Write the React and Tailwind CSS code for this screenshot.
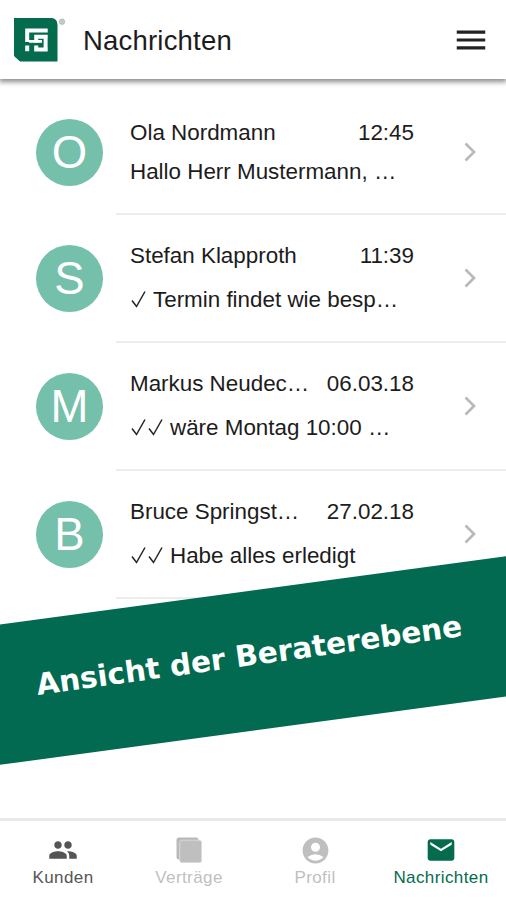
import React from "react";
import { MdAccountCircle, MdEmail, MdMenu, MdPeople } from "react-icons/md";

const messages = [
  { name: "Ola Nordmann", date: "12:45", text: "Hallo Herr Mustermann, …", checks: 0 },
  { name: "Stefan Klapproth", date: "11:39", text: "Termin findet wie besp…", checks: 1 },
  { name: "Markus Neudec…", date: "06.03.18", text: "wäre Montag 10:00 …", checks: 2 },
  { name: "Bruce Springst…", date: "27.02.18", text: "Habe alles erledigt", checks: 2 },
];

function Logo() {
  return (
    <svg viewBox="0 0 52 44" className="h-11 w-[52px]">
      <path d="M0 0H38Q43.5 1 43.5 7V43.5H6L0 38Z" fill="#046b4d" />
      <path
        d="M13.2 10.6V24M11.2 12.5H33.7M13.2 27.6V33.2M31.6 17V33.2M20.3 18.8H33.7M22.2 17V24.6M22.2 27.6V33.2M20.3 31.4H33.7"
        fill="none"
        stroke="#fff"
        strokeWidth="4"
      />
      <path d="M15 23.4H28" stroke="#fff" strokeWidth="2.8" />
      <circle cx="48" cy="3.7" r="2.7" fill="#c3ceca" stroke="#a9b5b1" strokeWidth="0.8" />
    </svg>
  );
}

function Check() {
  return (
    <svg viewBox="0 0 17 18" className="h-[18px] w-[17px]">
      <path d="M2 10.5L6.5 16.5L15 1.5" fill="none" stroke="#222" strokeWidth="1.5" />
    </svg>
  );
}

function Chevron() {
  return (
    <svg viewBox="0 0 12 20" className="ml-[50px] h-5 w-3">
      <path d="M1.5 1.5L10 10L1.5 18.5" fill="none" stroke="#b9b9b9" strokeWidth="2.7" />
    </svg>
  );
}

function SheetsIcon() {
  return (
    <svg viewBox="0 0 26 26" className="size-[26px]">
      <rect x="0.5" y="0.5" width="22" height="22" rx="2.5" fill="#b9b9b9" />
      <rect x="3.7" y="3.2" width="22" height="22.5" rx="2.5" fill="#bfbfbf" stroke="#e0e0e0" strokeWidth="0.8" />
    </svg>
  );
}

function MessageRow({ message, first }) {
  return (
    <div className={first ? "flex h-[124px] pl-9" : "flex h-32 pl-9"}>
      <div className="flex w-20 shrink-0 items-center pb-px">
        <div className="flex size-[67px] items-center justify-center rounded-full bg-[#74c0aa] text-[45.5px] leading-none text-white">
          {message.name[0]}
        </div>
      </div>
      <div className="flex flex-1 items-center border-b-2 border-[#ececec] pb-px pl-3.5">
        <div className={first ? "w-[284px] leading-[39px]" : "w-[284px] leading-[43.5px]"}>
          <div className="flex justify-between whitespace-nowrap">
            <span>{message.name}</span>
            <span>{message.date}</span>
          </div>
          <div className="flex items-center whitespace-nowrap">
            {Array.from({ length: message.checks }).map((_, index) => (
              <Check key={index} />
            ))}
            <span className={message.checks ? "pl-1.5" : ""}>{message.text}</span>
          </div>
        </div>
        <Chevron />
      </div>
    </div>
  );
}

function NavItem({ icon, label, className }) {
  return (
    <div className={`flex flex-col items-center ${className}`}>
      <div className="flex h-8 items-center">{icon}</div>
      <span className="text-[17px] leading-6 tracking-[0.4px]">{label}</span>
    </div>
  );
}

export default function App() {
  return (
    <div className="relative flex h-[900px] w-[506px] flex-col overflow-hidden bg-white font-['Liberation_Sans',Arial,sans-serif] text-[22.4px] text-[#1c1c1c]">
      <header className="flex h-[79px] shrink-0 items-center border-t border-transparent bg-white pr-4 pl-3.5 shadow-[0_2px_5px_1px_rgba(0,0,0,0.45)]">
        <Logo />
        <h1 className="ml-[17px] pt-px text-[27.5px] tracking-[0.2px]">Nachrichten</h1>
        <MdMenu className="ml-auto size-[38px] text-[#222]" />
      </header>

      <main className="flex-1 pt-3">
        {messages.map((message, index) => (
          <MessageRow key={message.name} message={message} first={index === 0} />
        ))}
      </main>

      <div className="absolute top-[590.5px] -left-5 flex h-[138.5px] w-[546px] -rotate-[7.7deg] items-center justify-center bg-[#026a50]">
        <span className="-rotate-[0.2deg] pr-1.5 pb-2.5 font-['DejaVu_Sans',Verdana,sans-serif] text-[29.6px] font-bold whitespace-nowrap text-white">
          Ansicht der Beraterebene
        </span>
      </div>

      <nav className="h-[82px] shrink-0 border-t-[3px] border-[#e9e9e9] bg-white pt-[13px]">
        <div className="grid w-[504px] grid-cols-4">
          <NavItem icon={<MdPeople className="size-[30px]" />} label="Kunden" className="text-[#555]" />
          <NavItem icon={<SheetsIcon />} label="Verträge" className="text-[#bfbfbf]" />
          <NavItem icon={<MdAccountCircle className="size-[31px]" />} label="Profil" className="text-[#bfbfbf]" />
          <NavItem icon={<MdEmail className="size-8" />} label="Nachrichten" className="text-[#046b4d]" />
        </div>
      </nav>
    </div>
  );
}
